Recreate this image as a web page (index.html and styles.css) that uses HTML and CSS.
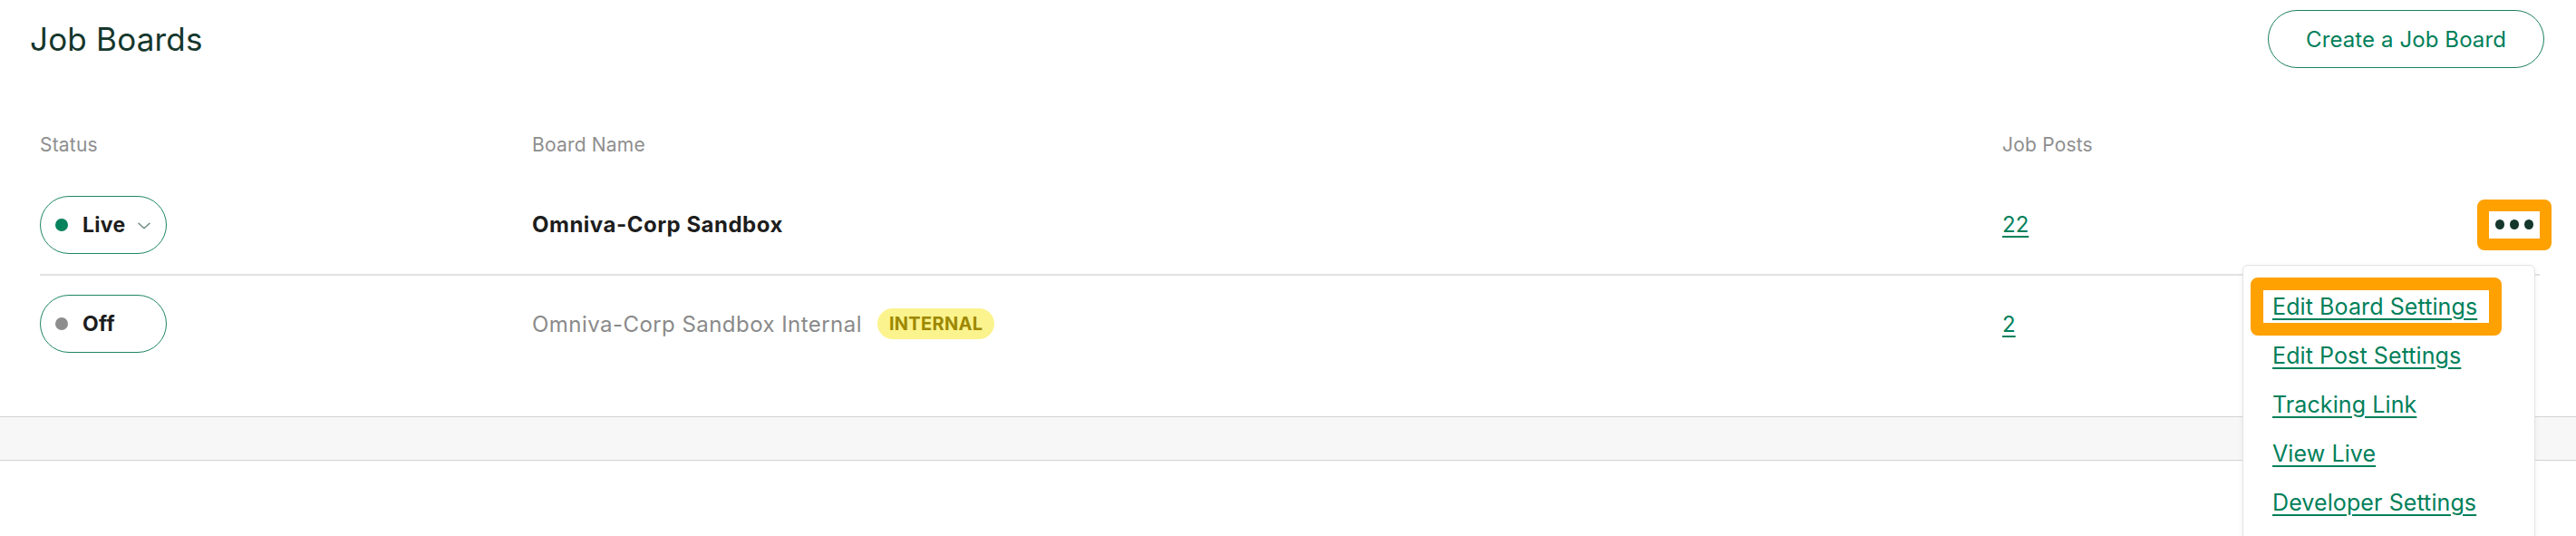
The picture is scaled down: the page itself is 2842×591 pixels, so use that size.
FILE: index.html
```html
<!DOCTYPE html>
<html lang="en">
<head>
<meta charset="utf-8">
<title>Job Boards</title>
<link rel="stylesheet" href="styles.css">
</head>
<body>
<div class="page">
  <header class="top">
    <h1 class="title">Job Boards</h1>
    <button class="btn-outline" type="button">Create a Job Board</button>
  </header>

  <div class="table">
    <div class="row head">
      <div class="cell">Status</div>
      <div class="cell">Board Name</div>
      <div class="cell">Job Posts</div>
      <div class="cell"></div>
    </div>

    <div class="row first">
      <div class="cell">
        <span class="pill">
          <span class="dot dot-live"></span>
          <span class="pill-label">Live</span>
          <svg class="chev" width="14" height="8" viewBox="0 0 14 8" aria-hidden="true"><path d="M1 1.2 L7 6.8 L13 1.2" fill="none" stroke="#6f8c81" stroke-width="1.5" stroke-linecap="round" stroke-linejoin="round"/></svg>
        </span>
      </div>
      <div class="cell name-strong">Omniva-Corp Sandbox</div>
      <div class="cell"><a class="link" href="#">22</a></div>
      <div class="cell actions">
        <span class="annot annot-btn">
          <button class="dots" type="button" aria-label="More"><i></i><i></i><i></i></button>
        </span>
        <div class="menu">
          <span class="annot annot-item"><a class="menu-link" href="#">Edit Board Settings</a></span>
          <a class="menu-link" href="#">Edit Post Settings</a>
          <a class="menu-link" href="#">Tracking Link</a>
          <a class="menu-link" href="#">View Live</a>
          <a class="menu-link" href="#">Developer Settings</a>
        </div>
      </div>
    </div>

    <div class="row second">
      <div class="cell">
        <span class="pill">
          <span class="dot dot-off"></span>
          <span class="pill-label">Off</span>
        </span>
      </div>
      <div class="cell name-muted">Omniva-Corp Sandbox Internal <span class="badge">Internal</span></div>
      <div class="cell"><a class="link" href="#">2</a></div>
      <div class="cell"></div>
    </div>
  </div>

  <div class="band"></div>
</div>
</body>
</html>
```

FILE: styles.css
```css
html, body {
  margin: 0;
  padding: 0;
  background: #ffffff;
  height: 591px;
  overflow: hidden;
}

body {
  font-family: Inter, "Liberation Sans", Arial, sans-serif;
  color: #222222;
}

.page {
  width: 100%;
}

.top {
  display: flex;
  justify-content: space-between;
  align-items: center;
  padding: 11px 35px 0 33px;
}

.title {
  margin: 0;
  font-size: 35px;
  font-weight: 400;
  color: #15372c;
  letter-spacing: 0.2px;
}

.btn-outline {
  width: 305px;
  height: 64px;
  border: 1.5px solid #1b7f5f;
  border-radius: 32px;
  background: #ffffff;
  color: #00805a;
  font-family: Inter, "Liberation Sans", Arial, sans-serif;
  font-size: 24px;
  font-weight: 400;
  letter-spacing: 0.1px;
  padding: 0;
}

.table {
  margin: 50px 40px 0 44px;
}

.row {
  display: grid;
  grid-template-columns: 543px 1622px 1fr 56px;
  align-items: center;
}

.row.head {
  height: 68px;
  font-size: 21px;
  color: #8e8e8e;
  letter-spacing: 0.2px;
}

.row.first {
  height: 109px;
  border-bottom: 2px solid #e2e2e2;
}

.row.second {
  height: 106px;
}

.cell {
  min-width: 0;
}

.pill {
  box-sizing: border-box;
  display: inline-flex;
  align-items: center;
  width: 140px;
  height: 64px;
  border: 1.5px solid #1e8565;
  border-radius: 32px;
  padding-left: 16px;
}

.dot {
  width: 14px;
  height: 14px;
  border-radius: 50%;
  margin-right: 16px;
}

.dot-live { background: #04825c; }
.dot-off { background: #8d8d8d; }

.pill-label {
  font-size: 23px;
  font-weight: 700;
  color: #1d1d1d;
  letter-spacing: 0.3px;
}

.chev {
  margin-left: 13px;
  margin-top: 2px;
}

.name-strong {
  font-size: 24px;
  font-weight: 700;
  color: #1d1d1d;
  letter-spacing: 0.5px;
}

.name-muted {
  display: flex;
  align-items: center;
  font-size: 24px;
  color: #8a8a8a;
  letter-spacing: 0.45px;
}

.badge {
  display: inline-flex;
  align-items: center;
  height: 34px;
  margin-left: 17px;
  padding: 0 13px;
  border-radius: 17px;
  background: #fbf38d;
  color: #9d8800;
  font-size: 20px;
  font-weight: 700;
  text-transform: uppercase;
  letter-spacing: 0.3px;
}

.link {
  color: #00805a;
  font-size: 24px;
  text-decoration: underline;
  text-decoration-thickness: 2px;
  text-underline-offset: 4px;
}

.actions {
  position: relative;
  display: flex;
  justify-content: flex-end;
  align-items: center;
}

.annot {
  display: inline-block;
  border: 14px solid #ffa100;
  border-radius: 8px;
  margin: -14px;
}

.annot-btn {
  border-width: 13px;
  margin: -13px;
  line-height: 0;
}

.dots {
  display: flex;
  justify-content: center;
  align-items: center;
  gap: 6px;
  width: 56px;
  height: 30px;
  padding: 0;
  border: 0;
  background: #ffffff;
}

.dots i {
  display: block;
  width: 10px;
  height: 11px;
  border-radius: 50%;
  background: #15372c;
}

.menu {
  position: absolute;
  top: calc(100% + 29px);
  right: 5px;
  box-sizing: border-box;
  width: 323px;
  padding: 27px 0 30px 22px;
  background: #ffffff;
  border: 1px solid #e3e3e3;
  border-radius: 6px;
  box-shadow: 0 2px 6px rgba(0, 0, 0, 0.06);
  display: flex;
  flex-direction: column;
  align-items: flex-start;
  gap: 18px;
  z-index: 5;
}

.menu-link {
  display: block;
  padding: 0 13px 0 10px;
  height: 36px;
  line-height: 36px;
  font-size: 25px;
  letter-spacing: 0.1px;
  color: #00805a;
  text-decoration: underline;
  text-decoration-thickness: 2px;
  text-underline-offset: 4px;
  white-space: nowrap;
  background: #ffffff;
}

.band {
  margin-top: 49px;
  height: 47px;
  background: #f7f7f7;
  border-top: 1px solid #d2d2d2;
  border-bottom: 1px solid #d2d2d2;
}
```
